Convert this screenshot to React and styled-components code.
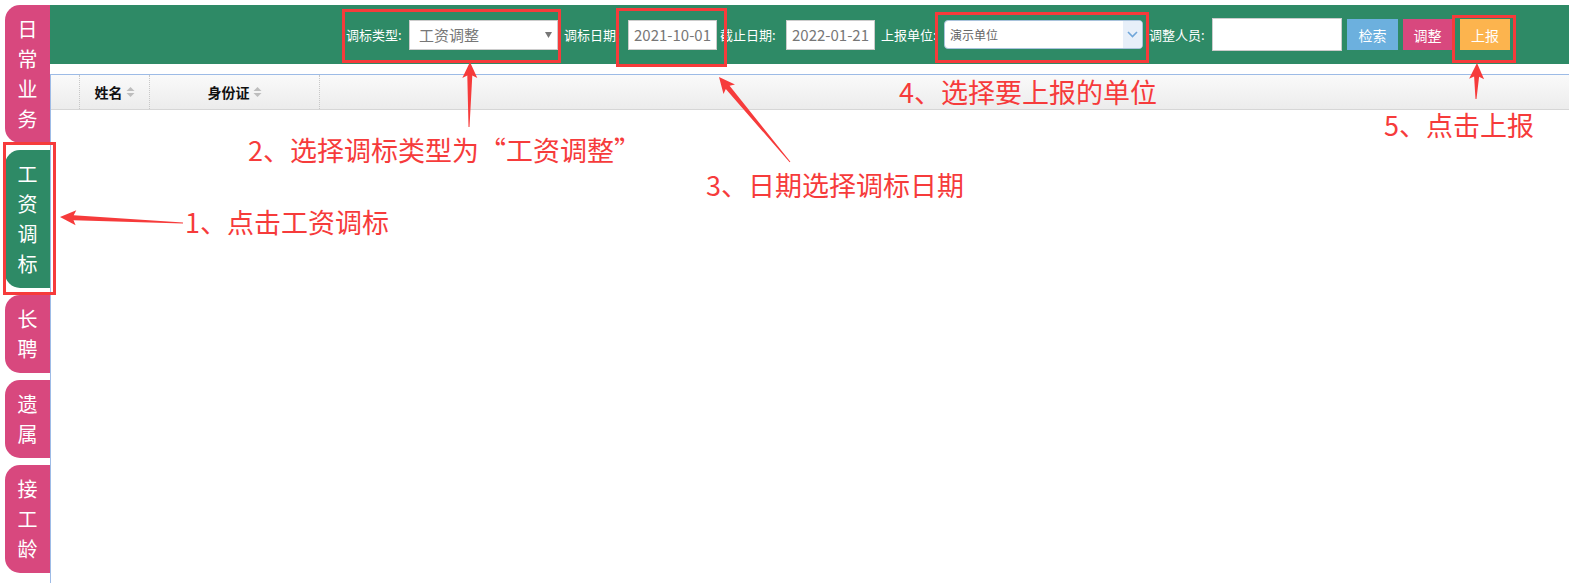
import React from "react";
import styled, { createGlobalStyle } from "styled-components";

const GlobalStyle = createGlobalStyle`
  html, body { margin: 0; padding: 0; background: #fff; }
  body { font-family: "Noto Sans CJK SC", "Noto Sans", sans-serif; }
  * { box-sizing: border-box; }
`;

const C = {
  green: "#2e8a66",
  pink: "#d8487e",
  orange: "#fcb44e",
  blue: "#6cb0de",
  red: "#f63b3b",
  line: "#9dbbe6",
};

const Page = styled.div`
  position: relative;
  width: 1569px;
  height: 583px;
  display: flex;
  overflow: hidden;
`;

const Sidebar = styled.nav`
  width: 50px;
  flex: none;
  padding: 5px 0 0 5px;
  display: flex;
  flex-direction: column;
  gap: 7px;
`;

const Tab = styled.div`
  width: 45px;
  padding: 9px 0;
  border-radius: 15px 0 0 15px;
  background: ${(p) => (p.$active ? C.green : C.pink)};
  color: #fff;
  font-size: 20px;
  line-height: 30px;
  text-align: center;
`;

const Char = styled.span`
  display: block;
`;

const Main = styled.main`
  flex: 1;
  display: flex;
  flex-direction: column;
  padding-top: 5px;
`;

const Toolbar = styled.div`
  height: 59px;
  background: ${C.green};
  display: flex;
  align-items: center;
  padding-left: 296px;
`;

const Label = styled.span`
  color: #fff;
  font-size: 13px;
  white-space: nowrap;
  width: ${(p) => p.$w || 59}px;
  margin-left: ${(p) => p.$ml || 0}px;
`;

const Select = styled.div`
  position: relative;
  width: 149px;
  height: 30px;
  margin-left: 4px;
  background: #fff;
  border: 1px solid #ccc;
  color: #777;
  font-size: 15px;
  line-height: 28px;
  padding-left: 9px;
`;

const Caret = styled.svg`
  position: absolute;
  right: 5px;
  top: 11px;
`;

const DateInput = styled.div`
  width: 89px;
  height: 30px;
  margin-left: ${(p) => p.$ml || 4}px;
  background: #fff;
  border: 1px solid #ccc;
  color: #777;
  font-size: 15px;
  line-height: 28px;
  padding-left: 5px;
  white-space: nowrap;
  overflow: hidden;
`;

const UnitSelect = styled.div`
  position: relative;
  width: 199px;
  height: 29px;
  margin-left: 4px;
  background: #fff;
  border: 1px solid #a9c3dc;
  border-radius: 4px;
  color: #666;
  font-size: 12px;
  line-height: 27px;
  padding-left: 5px;
  overflow: hidden;
`;

const ChevronBox = styled.span`
  position: absolute;
  right: 0;
  top: 0;
  bottom: 0;
  width: 19px;
  background: #e7eff9;
  display: flex;
  align-items: center;
  justify-content: center;
`;

const TextInput = styled.div`
  width: 130px;
  height: 33px;
  margin-left: 4px;
  background: #fff;
  border: 1px solid #ccc;
`;

const Button = styled.button`
  height: 31px;
  width: ${(p) => p.$w}px;
  margin-left: ${(p) => p.$ml}px;
  border: none;
  padding: 0;
  background: ${(p) => p.$bg};
  color: #fff;
  font-family: inherit;
  font-size: 14px;
`;

const Grid = styled.section`
  flex: 1;
  margin-top: 10px;
  border-top: 1px solid ${C.line};
  border-left: 1px solid ${C.line};
`;

const HeadRow = styled.div`
  height: 35px;
  display: flex;
  background: linear-gradient(#fafafa, #ececec);
  border-bottom: 1px solid #d6d6d6;
`;

const HeadCell = styled.div`
  width: ${(p) => p.$w}px;
  ${(p) => (p.$grow ? "flex: 1;" : "flex: none;")}
  border-right: ${(p) => (p.$grow ? "none" : "1px dotted #c8c8c8")};
  display: flex;
  align-items: center;
  justify-content: center;
  gap: 3px;
  font-size: 14px;
  font-weight: bold;
  color: #111;
`;

const SortIcon = () => (
  <svg width="9" height="12" viewBox="0 0 9 12">
    <path d="M0.5 5 L4.5 1 L8.5 5 Z M0.5 7 L4.5 11 L8.5 7 Z" fill="#bdbdbd" />
  </svg>
);

const Box = styled.div`
  position: absolute;
  border: 3px solid ${C.red};
  pointer-events: none;
`;

const Note = styled.div`
  position: absolute;
  color: ${C.red};
  font-size: 27px;
  line-height: 1;
  white-space: nowrap;
  pointer-events: none;
`;

const Overlay = styled.svg`
  position: absolute;
  left: 0;
  top: 0;
  pointer-events: none;
`;

function arrow(x1, y1, x2, y2, headLen = 16, headW = 15, shaftW = 5, tailW = 1) {
  const dx = x2 - x1;
  const dy = y2 - y1;
  const L = Math.hypot(dx, dy);
  const ux = dx / L;
  const uy = dy / L;
  const px = -uy;
  const py = ux;
  const bx = x2 - ux * headLen;
  const by = y2 - uy * headLen;
  const jx = x2 - ux * headLen * 0.85;
  const jy = y2 - uy * headLen * 0.85;
  const pts = [
    [x1 + (px * tailW) / 2, y1 + (py * tailW) / 2],
    [jx + (px * shaftW) / 2, jy + (py * shaftW) / 2],
    [bx + (px * headW) / 2, by + (py * headW) / 2],
    [x2, y2],
    [bx - (px * headW) / 2, by - (py * headW) / 2],
    [jx - (px * shaftW) / 2, jy - (py * shaftW) / 2],
    [x1 - (px * tailW) / 2, y1 - (py * tailW) / 2],
  ];
  return pts.map((p) => p.map((v) => v.toFixed(1)).join(",")).join(" ");
}

const tabs = [
  { t: "日常业务" },
  { t: "工资调标", active: true },
  { t: "长聘" },
  { t: "遗属" },
  { t: "接工龄" },
];

const boxes = [
  { x: 3, y: 142, w: 53, h: 153 },
  { x: 342, y: 9, w: 219, h: 54 },
  { x: 616, y: 8, w: 111, h: 59 },
  { x: 935, y: 12, w: 214, h: 51 },
  { x: 1452, y: 15, w: 64, h: 48 },
];

const notes = [
  { x: 185, y: 208, t: "1、点击工资调标" },
  { x: 248, y: 136, t: "2、选择调标类型为“工资调整”" },
  { x: 706, y: 171, t: "3、日期选择调标日期" },
  { x: 899, y: 78, t: "4、选择要上报的单位" },
  { x: 1384, y: 111, t: "5、点击上报" },
];

const arrows = [
  [183, 223, 60, 217],
  [469, 127, 470, 62],
  [790, 162, 719, 77],
  [1476, 99, 1477, 63],
];

export default function App() {
  return (
    <>
      <GlobalStyle />
      <Page>
        <Sidebar>
          {tabs.map((tab) => (
            <Tab key={tab.t} $active={tab.active}>
              {tab.t.split("").map((c, i) => (
                <Char key={i}>{c}</Char>
              ))}
            </Tab>
          ))}
        </Sidebar>
        <Main>
          <Toolbar>
            <Label>调标类型:</Label>
            <Select>
              工资调整
              <Caret width="7" height="6" viewBox="0 0 7 6">
                <path d="M0 0 L7 0 L3.5 6 Z" fill="#777" />
              </Caret>
            </Select>
            <Label $ml={6} $w={60}>调标日期:</Label>
            <DateInput>2021-10-01</DateInput>
            <Label $ml={3} $w={62}>截止日期:</Label>
            <DateInput $ml={4}>2022-01-21</DateInput>
            <Label $ml={6} $w={59}>上报单位:</Label>
            <UnitSelect>
              演示单位
              <ChevronBox>
                <svg width="11" height="7" viewBox="0 0 11 7">
                  <path d="M1 1 L5.5 5.5 L10 1" fill="none" stroke="#6fa6da" strokeWidth="1.6" />
                </svg>
              </ChevronBox>
            </UnitSelect>
            <Label $ml={6} $w={59}>调整人员:</Label>
            <TextInput />
            <Button $w={51} $ml={5} $bg={C.blue}>检索</Button>
            <Button $w={49} $ml={5} $bg={C.pink}>调整</Button>
            <Button $w={50} $ml={8} $bg={C.orange}>上报</Button>
          </Toolbar>
          <Grid>
            <HeadRow>
              <HeadCell $w={29} />
              <HeadCell $w={70}>
                姓名
                <SortIcon />
              </HeadCell>
              <HeadCell $w={170}>
                身份证
                <SortIcon />
              </HeadCell>
              <HeadCell $grow />
            </HeadRow>
          </Grid>
        </Main>

        {boxes.map((b, i) => (
          <Box key={i} style={{ left: b.x, top: b.y, width: b.w, height: b.h }} />
        ))}
        {notes.map((n, i) => (
          <Note key={i} style={{ left: n.x, top: n.y }}>
            {n.t}
          </Note>
        ))}
        <Overlay width="1569" height="583" viewBox="0 0 1569 583">
          {arrows.map((a, i) => (
            <polygon key={i} points={arrow(...a)} fill={C.red} />
          ))}
        </Overlay>
      </Page>
    </>
  );
}
